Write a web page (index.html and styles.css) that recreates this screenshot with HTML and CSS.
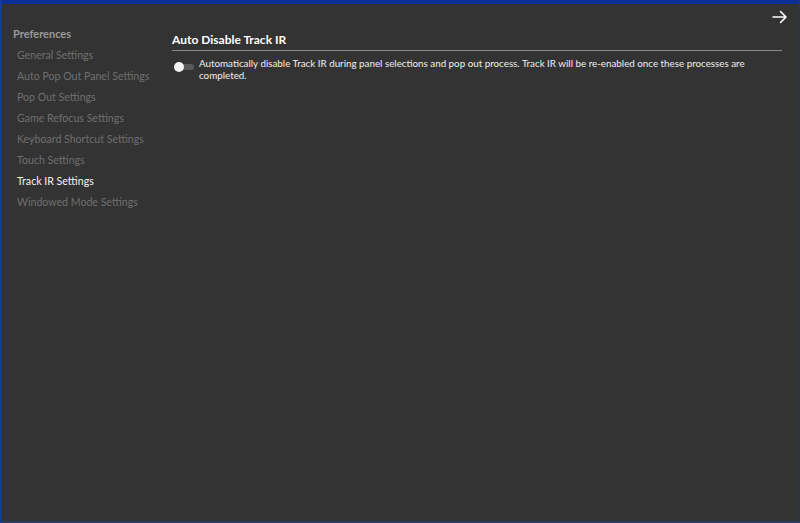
FILE: index.html
```html
<!DOCTYPE html>
<html lang="en">
<head>
<meta charset="utf-8">
<title>Preferences</title>
<link rel="stylesheet" href="styles.css">
</head>
<body>
<div class="window">
  <div class="titlebar"></div>
  <div class="body">
    <nav class="sidebar">
      <div class="sidebar-title">Preferences</div>
      <a class="nav-item">General Settings</a>
      <a class="nav-item">Auto Pop Out Panel Settings</a>
      <a class="nav-item">Pop Out Settings</a>
      <a class="nav-item">Game Refocus Settings</a>
      <a class="nav-item">Keyboard Shortcut Settings</a>
      <a class="nav-item">Touch Settings</a>
      <a class="nav-item active">Track IR Settings</a>
      <a class="nav-item">Windowed Mode Settings</a>
    </nav>
    <main class="content">
      <div class="topbar">
        <svg class="close-arrow" width="16" height="14" viewBox="0 0 16 14">
          <path d="M1 7 H14 M8.5 1.5 L14 7 L8.5 12.5" fill="none" stroke="#fff" stroke-width="1.6" stroke-linecap="round" stroke-linejoin="round"/>
        </svg>
      </div>
      <section class="section">
        <h2 class="section-title">Auto Disable Track IR</h2>
        <div class="option">
          <span class="toggle"><span class="knob"></span></span>
          <p class="option-text">Automatically disable Track IR during panel selections and pop out process. Track IR will be re-enabled once these processes are completed.</p>
        </div>
      </section>
    </main>
  </div>
</div>
</body>
</html>
```
FILE: styles.css
```css
html, body {
  margin: 0;
  padding: 0;
  width: 800px;
  height: 523px;
  overflow: hidden;
  background: #333333;
  font-family: "Lato", "Open Sans", "Liberation Sans", sans-serif;
}

.window {
  width: 800px;
  height: 523px;
  box-sizing: border-box;
  border-left: 2px solid #163a9a;
  border-right: 1px solid #2c3550;
  border-bottom: 2px solid #2b3c60;
  display: flex;
  flex-direction: column;
  background: #333333;
}

.titlebar {
  height: 4px;
  background: #0b2f94;
  flex: none;
}

.body {
  flex: 1;
  display: flex;
}

.sidebar {
  width: 160px;
  box-sizing: border-box;
  flex: none;
  padding: 22px 0 0 11px;
  display: flex;
  flex-direction: column;
}

.sidebar-title {
  font-size: 11px;
  font-weight: 700;
  color: #9a9a9a;
  height: 22px;
  line-height: 15px;
}

.nav-item {
  font-size: 10.6px;
  color: #6f6f6f;
  padding-left: 4px;
  height: 21px;
  line-height: 15px;
  white-space: nowrap;
}

.nav-item.active {
  color: #f2f2f2;
}

.content {
  flex: 1;
  padding: 0 17px 0 10px;
  display: flex;
  flex-direction: column;
}

.topbar {
  height: 22px;
  display: flex;
  justify-content: flex-end;
  align-items: flex-end;
}

.close-arrow {
  margin-right: -6px;
  margin-bottom: 2px;
}

.section-title {
  margin: 5px 0 0;
  font-size: 12px;
  font-weight: 700;
  color: #ffffff;
  line-height: 17px;
  padding-bottom: 2px;
  border-bottom: 1px solid #8a8a8a;
}

.option {
  display: flex;
  align-items: flex-start;
  margin-top: 6px;
  padding-left: 2px;
}

.toggle {
  position: relative;
  flex: none;
  width: 20px;
  height: 6px;
  margin-top: 7px;
  margin-right: 5px;
  border-radius: 3px;
  background: #5a5a5a;
}

.knob {
  position: absolute;
  left: 0;
  top: -2px;
  width: 10px;
  height: 10px;
  border-radius: 50%;
  background: #f4f4f4;
}

.option-text {
  margin: 0;
  font-size: 9.8px;
  line-height: 12px;
  color: #f0f0f0;
  padding-right: 20px;
}
```
